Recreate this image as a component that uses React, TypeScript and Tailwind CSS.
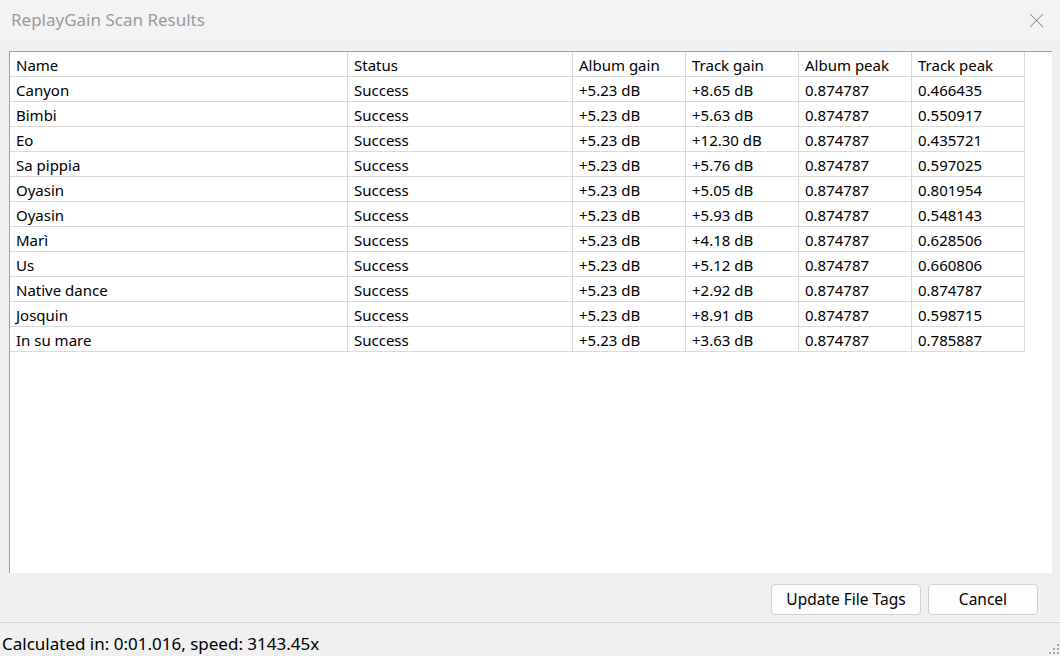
import { X } from "lucide-react";

const COLS = [
  { label: "Name", w: "w-[338px]" },
  { label: "Status", w: "w-[225px]" },
  { label: "Album gain", w: "w-[113px]" },
  { label: "Track gain", w: "w-[113px]" },
  { label: "Album peak", w: "w-[113px]" },
  { label: "Track peak", w: "w-[113px]" },
];

const ROWS: string[][] = [
  ["Canyon", "Success", "+5.23 dB", "+8.65 dB", "0.874787", "0.466435"],
  ["Bimbi", "Success", "+5.23 dB", "+5.63 dB", "0.874787", "0.550917"],
  ["Eo", "Success", "+5.23 dB", "+12.30 dB", "0.874787", "0.435721"],
  ["Sa pippia", "Success", "+5.23 dB", "+5.76 dB", "0.874787", "0.597025"],
  ["Oyasin", "Success", "+5.23 dB", "+5.05 dB", "0.874787", "0.801954"],
  ["Oyasin", "Success", "+5.23 dB", "+5.93 dB", "0.874787", "0.548143"],
  ["Marì", "Success", "+5.23 dB", "+4.18 dB", "0.874787", "0.628506"],
  ["Us", "Success", "+5.23 dB", "+5.12 dB", "0.874787", "0.660806"],
  ["Native dance", "Success", "+5.23 dB", "+2.92 dB", "0.874787", "0.874787"],
  ["Josquin", "Success", "+5.23 dB", "+8.91 dB", "0.874787", "0.598715"],
  ["In su mare", "Success", "+5.23 dB", "+3.63 dB", "0.874787", "0.785887"],
];

function Row({ cells }: { cells: string[] }) {
  return (
    <div className="flex h-[25px]">
      {cells.map((c, i) => (
        <div
          key={i}
          className={`${COLS[i].w} shrink-0 border-r border-b border-[#dadada] pl-[6px] pt-[2px] leading-[22px] whitespace-nowrap`}
        >
          {c}
        </div>
      ))}
    </div>
  );
}

export default function App() {
  return (
    <div
      className="w-[1060px] h-[656px] flex flex-col bg-[#f0f0f0] text-black overflow-hidden"
      style={{ fontFamily: '"Noto Sans", "Open Sans", sans-serif' }}
    >
      {/* Title bar */}
      <div className="h-[40px] shrink-0 flex items-center justify-between bg-[#f3f3f3] pl-[11px] pr-[11px]">
        <span className="text-[17px] text-[#9a9a9a]">ReplayGain Scan Results</span>
        <X className="w-[25px] h-[25px] text-[#8a8a8a]" strokeWidth={1} />
      </div>

      {/* Results table */}
      <div className="pt-[11px] pl-[9px] pr-[8px]">
        <div className="h-[522px] bg-white border-t border-l border-[#a0a0a0] text-[15px]">
          <Row cells={COLS.map((c) => c.label)} />
          {ROWS.map((r, i) => (
            <Row key={i} cells={r} />
          ))}
        </div>
      </div>

      {/* Buttons */}
      <div className="flex justify-end gap-[7px] pt-[11px] pr-[22px] pb-[7px]">
        <button className="w-[150px] h-[31px] rounded-[4px] border border-[#d0d0d0] bg-[#fdfdfd] text-[15.5px]">
          Update File Tags
        </button>
        <button className="w-[110px] h-[31px] rounded-[4px] border border-[#d0d0d0] bg-[#fdfdfd] text-[15.5px]">
          Cancel
        </button>
      </div>

      {/* Status bar */}
      <div className="relative flex-1 border-t border-[#d8d8d8] pl-[2px] pt-[9px]">
        <span className="text-[17px] leading-[23px]">Calculated in: 0:01.016, speed: 3143.45x</span>
        <svg className="absolute right-0 bottom-0" width="13" height="13" viewBox="0 0 13 13">
          {[
            [10, 1], [10, 5], [6, 5], [10, 9], [6, 9], [2, 9],
          ].map(([x, y], i) => (
            <rect key={i} x={x} y={y} width="2" height="2" fill="#a8a8a8" />
          ))}
        </svg>
      </div>
    </div>
  );
}
